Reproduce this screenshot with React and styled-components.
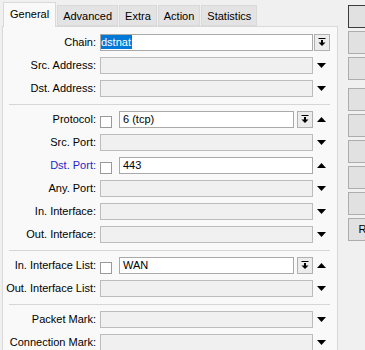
import React from 'react';
import styled, { createGlobalStyle } from 'styled-components';

const GlobalStyle = createGlobalStyle`
  html, body {
    margin: 0;
    padding: 0;
    background: #f0f0f0;
    overflow: hidden;
  }
  body {
    font-family: 'Liberation Sans', Arial, sans-serif;
    font-size: 11px;
    color: #000;
  }
`;

const Window = styled.div`
  display: flex;
  width: 365px;
  height: 350px;
  overflow: hidden;
  padding-left: 2px;
  box-sizing: border-box;
`;

const Main = styled.div`
  width: 336px;
  flex-shrink: 0;
  display: flex;
  flex-direction: column;
  padding-top: 2px;
`;

const TabBar = styled.div`
  display: flex;
  align-items: flex-end;
  height: 24px;
  padding-left: 1px;
  gap: 1px;
`;

const Tab = styled.div`
  box-sizing: border-box;
  height: ${p => (p.$active ? '25px' : '21px')};
  margin-bottom: ${p => (p.$active ? '-1px' : '0')};
  padding: 0 ${p => (p.$active ? '6px' : '5px')};
  line-height: ${p => (p.$active ? '23px' : '20px')};
  border: 1px solid #d9d9d9;
  border-bottom: ${p => (p.$active ? 'none' : '1px solid #d9d9d9')};
  background: ${p => (p.$active ? '#f9f9f9' : '#e3e3e3')};
  position: relative;
  z-index: ${p => (p.$active ? 1 : 0)};
  white-space: nowrap;
`;

const Panel = styled.div`
  flex: 1;
  border: 1px solid #d9d9d9;
  background: #f9f9f9;
  padding-top: 7px;
  display: flex;
  flex-direction: column;
  gap: 6px;
`;

const Row = styled.div`
  display: grid;
  grid-template-columns: 97px 213px 17px;
  height: 17px;
  align-items: center;
`;

const Label = styled.div`
  text-align: right;
  white-space: nowrap;
  line-height: 17px;
  padding-right: 4px;
  color: ${p => (p.$blue ? '#1f1fc8' : '#000')};
`;

const Content = styled.div`
  display: flex;
  align-items: center;
  height: 17px;
`;

const Field = styled.div`
  flex: 1;
  box-sizing: border-box;
  height: 17px;
  line-height: 15px;
  padding-left: ${p => (p.$pad ? '3px' : '0')};
  background: ${p => (p.$active ? '#fff' : '#f0f0f0')};
  border: 1px solid ${p => (p.$active ? '#a9a9a9' : '#bcbcbc')};
  white-space: nowrap;
  overflow: hidden;
`;

const Selected = styled.span`
  background: #0078d7;
  color: #fff;
  display: inline-block;
  line-height: 14px;
  padding-right: 1px;
`;

const Check = styled.div`
  box-sizing: border-box;
  width: 12px;
  height: 12px;
  align-self: flex-end;
  margin-right: 7px;
  border: 1px solid #9a9a9a;
  background: #fff;
  flex-shrink: 0;
`;

const DropButton = styled.div`
  box-sizing: border-box;
  width: 16px;
  height: 17px;
  margin-left: ${p => (p.$inline ? '3px' : '0')};
  border: 1px solid #b0b0b0;
  background: #ececec;
  display: flex;
  align-items: center;
  justify-content: center;
  flex-shrink: 0;
`;

const Trailing = styled.div`
  display: flex;
  align-items: center;
  justify-content: center;
  height: 17px;
`;

const Separator = styled.div`
  height: 1px;
  margin: 1px 7px 0 6px;
  background: #d6d6d6;
`;

const Side = styled.div`
  display: flex;
  flex-direction: column;
  gap: 3px;
  margin-left: 10px;
  padding-top: 5px;
  flex-shrink: 0;
`;

const SideButton = styled.div`
  box-sizing: border-box;
  width: 112px;
  height: 23px;
  line-height: 21px;
  text-align: center;
  white-space: nowrap;
  background: #e1e1e1;
  border: 1px solid ${p => (p.$default ? '#3c3c3c' : '#adadad')};
  margin-top: ${p => (p.$spaced ? '5px' : '0')};
`;

const DropIcon = () => (
  <svg width="8" height="9" viewBox="0 0 8 9">
    <rect x="0.5" y="0" width="7" height="1" fill="#000" />
    <rect x="3" y="2" width="2" height="3" fill="#000" />
    <polygon points="0.5,4.5 7.5,4.5 4,8" fill="#000" />
  </svg>
);

const Arrow = ({ up }) => (
  <svg width="9" height="5" viewBox="0 0 9 5">
    {up ? (
      <polygon points="0,5 9,5 4.5,0" fill="#000" />
    ) : (
      <polygon points="0,0 9,0 4.5,5" fill="#000" />
    )}
  </svg>
);

const PlainRow = ({ label }) => (
  <Row>
    <Label>{label}</Label>
    <Content>
      <Field />
    </Content>
    <Trailing>
      <Arrow />
    </Trailing>
  </Row>
);

const CheckRow = ({ label, value, blue, dropdown }) => (
  <Row>
    <Label $blue={blue}>{label}</Label>
    <Content>
      <Check />
      <Field $active $pad>{value}</Field>
      {dropdown && (
        <DropButton $inline>
          <DropIcon />
        </DropButton>
      )}
    </Content>
    <Trailing>
      <Arrow up />
    </Trailing>
  </Row>
);

const tabs = ['General', 'Advanced', 'Extra', 'Action', 'Statistics'];

const buttons = [
  { text: 'OK', def: true },
  { text: 'Cancel' },
  { text: 'Apply' },
  { text: 'Disable', spaced: true },
  { text: 'Comment' },
  { text: 'Copy' },
  { text: 'Remove' },
  { text: 'Reset Counters' },
  { text: 'Reset All Counters' },
];

export default function App() {
  return (
    <>
      <GlobalStyle />
      <Window>
        <Main>
          <TabBar>
            {tabs.map((t, i) => (
              <Tab key={t} $active={i === 0}>{t}</Tab>
            ))}
          </TabBar>
          <Panel>
            <Row>
              <Label>Chain:</Label>
              <Content>
                <Field $active>
                  <Selected>dstnat</Selected>
                </Field>
              </Content>
              <Trailing>
                <DropButton>
                  <DropIcon />
                </DropButton>
              </Trailing>
            </Row>
            <PlainRow label="Src. Address:" />
            <PlainRow label="Dst. Address:" />
            <Separator />
            <CheckRow label="Protocol:" value="6 (tcp)" dropdown />
            <PlainRow label="Src. Port:" />
            <CheckRow label="Dst. Port:" value="443" blue />
            <PlainRow label="Any. Port:" />
            <PlainRow label="In. Interface:" />
            <PlainRow label="Out. Interface:" />
            <Separator />
            <CheckRow label="In. Interface List:" value="WAN" dropdown />
            <PlainRow label="Out. Interface List:" />
            <Separator />
            <PlainRow label="Packet Mark:" />
            <PlainRow label="Connection Mark:" />
          </Panel>
        </Main>
        <Side>
          {buttons.map(b => (
            <SideButton key={b.text} $default={b.def} $spaced={b.spaced}>
              {b.text}
            </SideButton>
          ))}
        </Side>
      </Window>
    </>
  );
}
